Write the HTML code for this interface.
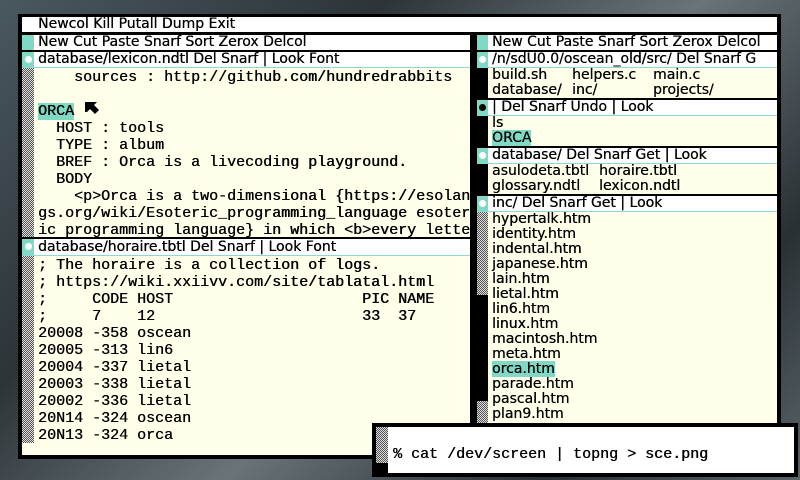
<!DOCTYPE html>
<html><head><meta charset="utf-8"><style>
*{margin:0;padding:0;box-sizing:border-box}
body{width:800px;height:480px;overflow:hidden;position:relative;background:linear-gradient(135deg,#4a5860 0%,#2c3438 30%,#6a7478 55%,#283034 80%,#5a6468 100%)}
.a{position:absolute}
.s{font-family:"DejaVu Sans","Liberation Sans",sans-serif;font-size:14px;color:#000;white-space:pre;line-height:15px;text-shadow:0.3px 0 0 #000}
.m{font-family:"Liberation Mono",monospace;font-size:15px;color:#000;white-space:pre;line-height:17px;text-shadow:0.4px 0 0 #000}
.chk{background-color:#999;background-image:repeating-conic-gradient(#555 0 25%,#ddd 0 50%);background-size:2px 2px}
.tag{background:#fff;border-bottom:1px solid #8fd6d6}
.bd{background:#ffffea}
.hl{background:#7fd9c4}
.dot{position:absolute;width:7px;height:7px;border-radius:50%;background:#fff;left:3px;top:4px}
</style></head><body>
<div class="a" style="left:18px;top:14px;width:763px;height:445px;background:#000"></div>
<div class="a tag" style="left:22px;top:17px;width:755px;height:15px;border:none"></div>
<div class="a s" style="left:38px;top:17px">Newcol Kill Putall Dump Exit</div>
<div class="a" style="left:22px;top:35px;width:448px;height:15px;background:#fff"></div>
<div class="a hl" style="left:22px;top:35px;width:12px;height:15px"></div>
<div class="a s" style="left:38px;top:35px">New Cut Paste Snarf Sort Zerox Delcol</div>
<div class="a tag" style="left:22px;top:52px;width:448px;height:16px"></div>
<div class="a hl" style="left:22px;top:52px;width:12px;height:15px"><div class="dot"></div></div>
<div class="a s" style="left:38px;top:52px">database/lexicon.ndtl Del Snarf | Look Font</div>
<div class="a bd" style="left:22px;top:68px;width:448px;height:169px"></div>
<div class="a chk" style="left:22px;top:68px;width:12px;height:169px"></div>
<div class="a m" style="left:38px;top:69px">    sources : http://github.com/hundredrabbits

<span class="hl">ORCA</span>
  HOST : tools
  TYPE : album
  BREF : Orca is a livecoding playground.
  BODY
    &lt;p&gt;Orca is a two-dimensional {https://esolan
gs.org/wiki/Esoteric_programming_language esoter
ic programming language} in which &lt;b&gt;every lette</div>
<svg class="a" style="left:84px;top:101px" width="16" height="16" viewBox="0 0 16 16"><path d="M1 1H13L10 4L15 9L11 13L6 8L3 11H1Z" fill="#000"/></svg>
<div class="a tag" style="left:22px;top:239px;width:448px;height:17px"></div>
<div class="a hl" style="left:22px;top:239px;width:12px;height:16px"><div class="dot"></div></div>
<div class="a s" style="left:38px;top:240px">database/horaire.tbtl Del Snarf | Look Font</div>
<div class="a bd" style="left:22px;top:256px;width:448px;height:199px"></div>
<div class="a chk" style="left:22px;top:256px;width:12px;height:187px"></div>
<div class="a m" style="left:38px;top:257px">; The horaire is a collection of logs.
; https://wiki.xxiivv.com/site/tablatal.html
;     CODE HOST                     PIC NAME
;     7    12                       33  37
20008 -358 oscean
20005 -313 lin6
20004 -337 lietal
20003 -338 lietal
20002 -336 lietal
20N14 -324 oscean
20N13 -324 orca</div>
<div class="a" style="left:477px;top:35px;width:300px;height:15px;background:#fff"></div>
<div class="a hl" style="left:477px;top:35px;width:11px;height:15px"></div>
<div class="a s" style="left:492px;top:35px">New Cut Paste Snarf Sort Zerox Delcol</div>
<div class="a tag" style="left:477px;top:52px;width:300px;height:16px"></div>
<div class="a hl" style="left:477px;top:52px;width:11px;height:15px"><div class="dot" style="left:2px"></div></div>
<div class="a s" style="left:492px;top:52px">/n/sdU0.0/oscean_old/src/ Del Snarf G</div>
<div class="a bd" style="left:477px;top:68px;width:300px;height:30px"></div>
<div class="a" style="left:477px;top:68px;width:11px;height:30px;background:#000"></div>
<div class="a s" style="left:492px;top:68px">build.sh</div>
<div class="a s" style="left:572px;top:68px">helpers.c</div>
<div class="a s" style="left:653px;top:68px">main.c</div>
<div class="a s" style="left:492px;top:83px">database/</div>
<div class="a s" style="left:572px;top:83px">inc/</div>
<div class="a s" style="left:653px;top:83px">projects/</div>
<div class="a tag" style="left:477px;top:100px;width:300px;height:16px"></div>
<div class="a hl" style="left:477px;top:100px;width:11px;height:15px"><div class="dot" style="left:2px;background:#000"></div></div>
<div class="a s" style="left:492px;top:100px">| Del Snarf Undo | Look</div>
<div class="a bd" style="left:477px;top:116px;width:300px;height:30px"></div>
<div class="a" style="left:477px;top:116px;width:11px;height:30px;background:#000"></div>
<div class="a s" style="left:492px;top:116px">ls
<span class="hl">ORCA</span></div>
<div class="a tag" style="left:477px;top:148px;width:300px;height:16px"></div>
<div class="a hl" style="left:477px;top:148px;width:11px;height:15px"><div class="dot" style="left:2px"></div></div>
<div class="a s" style="left:492px;top:148px">database/ Del Snarf Get | Look</div>
<div class="a bd" style="left:477px;top:164px;width:300px;height:30px"></div>
<div class="a" style="left:477px;top:164px;width:11px;height:30px;background:#000"></div>
<div class="a s" style="left:492px;top:164px">asulodeta.tbtl</div>
<div class="a s" style="left:599px;top:164px">horaire.tbtl</div>
<div class="a s" style="left:492px;top:179px">glossary.ndtl</div>
<div class="a s" style="left:599px;top:179px">lexicon.ndtl</div>
<div class="a tag" style="left:477px;top:196px;width:300px;height:16px"></div>
<div class="a hl" style="left:477px;top:196px;width:11px;height:15px"><div class="dot" style="left:2px"></div></div>
<div class="a s" style="left:492px;top:196px">inc/ Del Snarf Get | Look</div>
<div class="a bd" style="left:477px;top:212px;width:300px;height:243px"></div>
<div class="a chk" style="left:477px;top:212px;width:11px;height:243px"></div>
<div class="a" style="left:477px;top:295px;width:11px;height:106px;background:#000"></div>
<div class="a s" style="left:492px;top:212px">hypertalk.htm
identity.htm
indental.htm
japanese.htm
lain.htm
lietal.htm
lin6.htm
linux.htm
macintosh.htm
meta.htm
<span class="hl">orca.htm</span>
parade.htm
pascal.htm
plan9.htm</div>
<div class="a" style="left:372px;top:423px;width:426px;height:54px;background:#000"></div>
<div class="a" style="left:376px;top:427px;width:418px;height:46px;background:#fff"></div>
<div class="a chk" style="left:376px;top:427px;width:12px;height:46px"></div>
<div class="a" style="left:376px;top:463px;width:12px;height:10px;background:#000"></div>
<div class="a m" style="left:393px;top:446px">% cat /dev/screen | topng &gt; sce.png</div>
</body></html>
